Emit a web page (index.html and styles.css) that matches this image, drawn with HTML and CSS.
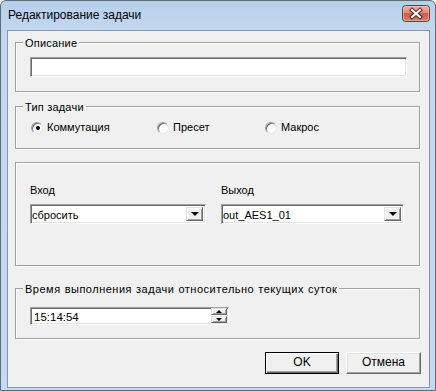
FILE: index.html
```html
<!DOCTYPE html>
<html lang="ru">
<head>
<meta charset="utf-8">
<title>Редактирование задачи</title>
<link rel="stylesheet" href="styles.css">
</head>
<body>
<div class="window">
  <div class="titlebar">
    <span class="title">Редактирование задачи</span>
    <span class="close">
      <svg width="28" height="17" viewBox="0 0 28 17">
        <defs>
          <linearGradient id="cg" x1="0" y1="0" x2="0" y2="1">
            <stop offset="0" stop-color="#eab3a8"/>
            <stop offset="0.45" stop-color="#dc8b7c"/>
            <stop offset="0.5" stop-color="#c95c4a"/>
            <stop offset="1" stop-color="#d6806a"/>
          </linearGradient>
        </defs>
        <rect x="0.5" y="0.5" width="27" height="16" rx="3" fill="url(#cg)" stroke="#7a3530"/>
        <rect x="1.5" y="1.5" width="25" height="14" rx="2" fill="none" stroke="#f0c8c0" stroke-opacity="0.6"/>
        <path d="M10 5 L18 12 M18 5 L10 12" stroke="#4a2020" stroke-width="4" stroke-linecap="square"/>
        <path d="M10 5 L18 12 M18 5 L10 12" stroke="#ffffff" stroke-width="2.2" stroke-linecap="square"/>
      </svg>
    </span>
  </div>
  <div class="client">
    <div class="group g1">
      <span class="group-title">Описание</span>
      <div class="field desc"></div>
    </div>

    <div class="group g2">
      <span class="group-title">Тип задачи</span>
      <div class="radios">
        <label class="radio-item"><span class="radio checked"></span>Коммутация</label>
        <label class="radio-item"><span class="radio"></span>Пресет</label>
        <label class="radio-item"><span class="radio"></span>Макрос</label>
      </div>
    </div>

    <div class="group g3">
      <div class="col col-in">
        <span class="lbl">Вход</span>
        <div class="field combo"><span class="combo-text">сбросить</span><span class="btn3d drop"><span class="tri"></span></span></div>
      </div>
      <div class="col col-out">
        <span class="lbl">Выход</span>
        <div class="field combo"><span class="combo-text">out_AES1_01</span><span class="btn3d drop"><span class="tri"></span></span></div>
      </div>
    </div>

    <div class="group g4">
      <span class="group-title">Время выполнения задачи относительно текущих суток</span>
      <div class="field time">
        <span class="time-text">15:14:54</span>
        <span class="spin">
          <span class="btn3d spin-btn"><span class="tri-s up"></span></span>
          <span class="btn3d spin-btn"><span class="tri-s"></span></span>
        </span>
      </div>
    </div>

    <div class="buttons">
      <button class="btn default">OK</button>
      <button class="btn">Отмена</button>
    </div>
  </div>
</div>
</body>
</html>
```

FILE: styles.css
```css
* { box-sizing: border-box; }

body {
  margin: 0;
  font-family: "Liberation Sans", Arial, sans-serif;
  font-size: 11px;
  color: #000;
  background: #fff;
}

.window {
  width: 436px;
  height: 391px;
  display: flex;
  flex-direction: column;
  background: linear-gradient(#b6cfea, #c3d8ef 29px, #c5daf0);
  border: 1px solid #5d6b7b;
  border-radius: 6px 6px 0 0;
  padding: 0 5px 2px 6px;
}

.titlebar {
  height: 29px;
  display: flex;
  justify-content: space-between;
  align-items: flex-start;
  padding-left: 1px;
}

.title {
  font-size: 12px;
  line-height: 15px;
  margin-top: 7px;
  color: #000;
}

.close {
  display: flex;
  margin-top: 4px;
}

.client {
  flex: 1;
  background: #f0f0f0;
  border: 1px solid #8297b0;
  padding: 11px 9px 0 7px;
  display: flex;
  flex-direction: column;
}

.group {
  border: 1px solid #a0a0a0;
  box-shadow: 1px 1px 0 #fff, inset 1px 1px 0 #fff;
  display: flex;
}

.group-title {
  line-height: 13px;
  margin: -6px 0 0 -7px;
  padding: 0 2px;
  background: #f0f0f0;
  align-self: flex-start;
  white-space: nowrap;
  letter-spacing: 0.2px;
}

.g1 {
  flex-direction: column;
  padding: 0 12px 14px 14px;
}

.g2 {
  margin-top: 14px;
  flex-direction: column;
  padding: 0 12px 14px 15px;
}

.g2 .group-title {
  margin-left: -8px;
}

.g3 {
  margin-top: 13px;
  padding: 21px 15px 41px 14px;
  gap: 15px;
}

.g4 {
  margin-top: 22px;
  flex-direction: column;
  padding: 0 12px 13px 14px;
}

.g4 .group-title {
  letter-spacing: 0.5px;
  word-spacing: 0.5px;
}

.field {
  background: #fff;
  border: 1px solid;
  border-color: #a0a0a0 #fff #fff #a0a0a0;
  box-shadow: inset 1px 1px 0 #696969, inset -1px -1px 0 #e3e3e3;
}

.desc {
  margin-top: 7px;
  height: 20px;
}

.radios {
  margin-top: 7px;
  display: grid;
  grid-template-columns: 126px 108px auto;
  line-height: 13px;
}

.radio-item {
  display: flex;
  align-items: center;
  gap: 4px;
}

.radio {
  width: 12px;
  height: 12px;
  border-radius: 50%;
  background: #fff;
  border: 1px solid;
  border-color: #a0a0a0 #e8e8e8 #e8e8e8 #a0a0a0;
  box-shadow: inset 1px 1px 0 #696969;
  display: flex;
  align-items: center;
  justify-content: center;
}

.radio.checked::after {
  content: "";
  width: 4px;
  height: 4px;
  border-radius: 50%;
  background: #000;
  margin: 1px 0 0 1px;
}

.col {
  display: flex;
  flex-direction: column;
}

.col-in { width: 176px; }
.col-out { width: 183px; }

.lbl {
  line-height: 13px;
  margin-bottom: 7px;
}

.combo {
  height: 20px;
  display: flex;
  padding: 2px;
  align-items: stretch;
}

.combo-text {
  flex: 1;
  line-height: 16px;
  margin-left: -1px;
}

.btn3d {
  background: #f0f0f0;
  border: 1px solid;
  border-color: #e3e3e3 #696969 #696969 #e3e3e3;
  box-shadow: inset 1px 1px 0 #fff, inset -1px -1px 0 #a0a0a0;
  display: flex;
  align-items: center;
  justify-content: center;
}

.drop {
  width: 17px;
}

.tri {
  width: 0;
  height: 0;
  border-left: 4px solid transparent;
  border-right: 4px solid transparent;
  border-top: 4px solid #000;
  margin-left: 1px;
}

.time {
  margin-top: 11px;
  width: 199px;
  height: 18px;
  display: flex;
  padding: 2px 1px 2px 2px;
}

.time-text {
  flex: 1;
  line-height: 14px;
  font-size: 11.5px;
  padding-left: 1px;
}

.spin {
  display: flex;
  flex-direction: column;
  gap: 1px;
  width: 16px;
  margin-top: -2px;
  margin-bottom: -1px;
}

.spin-btn {
  flex: 1;
}

.tri-s {
  width: 0;
  height: 0;
  border-left: 3px solid transparent;
  border-right: 3px solid transparent;
  border-top: 3px solid #000;
}

.tri-s.up {
  border-top: 0;
  border-bottom: 3px solid #000;
}

.buttons {
  margin-top: 13px;
  display: flex;
  justify-content: flex-end;
  gap: 7px;
  margin-right: -1px;
}

.btn {
  font-family: "Liberation Sans", Arial, sans-serif;
  font-size: 12px;
  width: 75px;
  height: 22px;
  padding: 0 0 2px 0;
  background: #f0f0f0;
  color: #000;
  border: 1px solid;
  border-color: #fff #696969 #696969 #fff;
  box-shadow: inset -1px -1px 0 #a0a0a0, inset 1px 1px 0 #e3e3e3;
}

.btn.default {
  width: 74px;
  border: 1px solid #000;
  box-shadow: inset 1px 1px 0 #fff, inset -1px -1px 0 #696969, inset -2px -2px 0 #a0a0a0;
}
```
